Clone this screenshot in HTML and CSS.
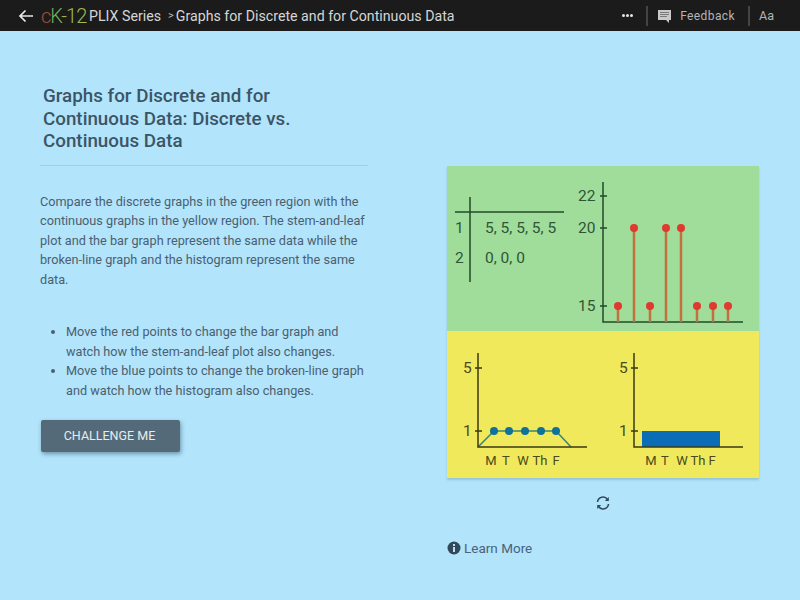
FILE: index.html
```html
<!DOCTYPE html>
<html>
<head>
	<meta charset="utf-8">
	<title>Graphs for Discrete and for Continuous Data</title>
	<link rel="stylesheet" href="styles.css">
</head>
<body>
	<header class="topbar">
		<div class="topLeft">
			<svg class="backIcon" width="16" height="14" viewBox="0 0 16 14">
				<path d="M15 7H2M7.500 1.500L2 7l5.500 5.500" fill="none" stroke="#e8e8e8" stroke-width="1.700"/>
			</svg>
			<span class="logo"><span class="logoC">c</span><span class="logoK">K</span><span class="logoNum">-12</span></span>
			<span class="series">PLIX Series</span>
			<span class="crumbSep">&gt;</span>
			<span class="crumb">Graphs for Discrete and for Continuous Data</span>
		</div>
		<div class="topRight">
			<span class="dots"><i></i><i></i><i></i></span>
			<span class="divider"></span>
			<svg class="feedIcon" width="13" height="14" viewBox="0 0 13 14">
				<path d="M0 1h13v10h-2v3l-3-3H0z" fill="#c9c9c9"/>
				<path d="M2 3.500h9M2 5.500h9M2 7.500h7" stroke="#7a7a7a" stroke-width="1"/>
			</svg>
			<span class="feedback">Feedback</span>
			<span class="divider"></span>
			<span class="fontBtn">Aa</span>
		</div>
	</header>

	<main class="page">
		<section class="textCol">
			<h1 class="title">Graphs for Discrete and for Continuous Data: Discrete vs. Continuous Data</h1>
			<p class="intro">Compare the discrete graphs in the green region with the continuous graphs in the yellow region. The stem-and-leaf plot and the bar graph represent the same data while the broken-line graph and the histogram represent the same data.</p>
			<ul class="steps">
				<li>Move the red points to change the bar graph and watch how the stem-and-leaf plot also changes.</li>
				<li>Move the blue points to change the broken-line graph and watch how the histogram also changes.</li>
			</ul>
			<button class="challenge">CHALLENGE ME</button>
		</section>

		<section class="figCol">
			<svg class="figure" width="312" height="312" viewBox="447 166 312 312">
				<rect x="447" y="166" width="312" height="165" fill="#a0dd9b"/>
				<rect x="447" y="331" width="312" height="148" fill="#f0e95c"/>

				<g stroke="#234a2a" stroke-width="1.500" fill="none">
					<path d="M470 197V282M455 212H564"/>
					<path d="M603 182V322H743M600 196H607M600 228H607M600 306H607"/>
				</g>
				<g fill="#2f5535" font-size="15.500">
					<text x="455" y="233">1</text>
					<text x="455" y="263">2</text>
					<text x="485" y="233">5, 5, 5, 5, 5</text>
					<text x="485" y="263">0, 0, 0</text>
					<text x="578" y="201">22</text>
					<text x="578" y="233">20</text>
					<text x="578" y="311">15</text>
				</g>
				<g stroke="#c2703f" stroke-width="2.500">
					<path d="M618 306V322M634 228V322M650 306V322M666 228V322M681 228V322M697 306V322M713 306V322M728 306V322"/>
				</g>
				<g fill="#e0392f">
					<circle cx="618" cy="306" r="4"/>
					<circle cx="634" cy="228" r="4"/>
					<circle cx="650" cy="306" r="4"/>
					<circle cx="666" cy="228" r="4"/>
					<circle cx="681" cy="228" r="4"/>
					<circle cx="697" cy="306" r="4"/>
					<circle cx="713" cy="306" r="4"/>
					<circle cx="728" cy="306" r="4"/>
				</g>

				<rect x="642" y="431" width="78" height="16" fill="#0b6db5"/>
				<path d="M478 447L494 431H556L571 447" fill="none" stroke="#3b8272" stroke-width="1.500"/>
				<g stroke="#3a3a14" stroke-width="1.500" fill="none">
					<path d="M478 353V447H587M475 368H482M475 431H482"/>
					<path d="M634 353V447H743M631 368H638M631 431H638"/>
				</g>
				<g fill="#0f7299">
					<circle cx="494" cy="431" r="4"/>
					<circle cx="509" cy="431" r="4"/>
					<circle cx="525" cy="431" r="4"/>
					<circle cx="541" cy="431" r="4"/>
					<circle cx="556" cy="431" r="4"/>
				</g>
				<g fill="#4a4a1c" font-size="15.500">
					<text x="463" y="373">5</text>
					<text x="463" y="436">1</text>
					<text x="619" y="373">5</text>
					<text x="619" y="436">1</text>
				</g>
				<g fill="#4a4a1c" font-size="13" text-anchor="middle">
					<text x="491" y="465">M</text>
					<text x="506" y="465">T</text>
					<text x="523" y="465">W</text>
					<text x="540" y="465">Th</text>
					<text x="556" y="465">F</text>
					<text x="651" y="465">M</text>
					<text x="665" y="465">T</text>
					<text x="682" y="465">W</text>
					<text x="698" y="465">Th</text>
					<text x="712" y="465">F</text>
				</g>
			</svg>
			<div class="reload">
				<svg width="16" height="16" viewBox="0 0 16 16" fill="none" stroke="#33495a" stroke-width="1.600">
					<path d="M2.500 7A5.500 5.500 0 0 1 12.500 4.500"/>
					<path d="M13.500 9A5.500 5.500 0 0 1 3.500 11.500"/>
					<path d="M13.800 2v4h-4z" fill="#33495a" stroke="none"/>
					<path d="M2.200 14v-4h4z" fill="#33495a" stroke="none"/>
				</svg>
			</div>
			<a class="learn">
				<svg width="14" height="14" viewBox="0 0 14 14">
					<circle cx="7" cy="7" r="6.500" fill="#33495a"/>
					<rect x="6" y="6" width="2" height="5" fill="#b2e4fb"/>
					<rect x="6" y="3" width="2" height="2" fill="#b2e4fb"/>
				</svg>
				<span>Learn More</span>
			</a>
		</section>
	</main>
</body>
</html>
```

FILE: styles.css
```css
body{
	margin: 0;
	height: 600px;
	overflow: hidden;
	background-color: #b2e4fb;
	font-family: Roboto, "Liberation Sans", sans-serif;
	color: #4a6070;
}
.topbar{
	height: 31px;
	background-color: #1b1b1b;
	display: flex;
	justify-content: space-between;
	align-items: center;
	color: #d6d6d6;
	font-size: 14.200px;
}
.topLeft{
	display: flex;
	align-items: center;
	padding-left: 18px;
}
.backIcon{
	margin-right: 7px;
}
.logo{
	font-family: Roboto, sans-serif;
	font-weight: 300;
	font-size: 20px;
	letter-spacing: -1px;
	width: 48px;
	white-space: nowrap;
}
.logoC{
	color: #a0503a;
}
.logoK{
	color: #6fb25a;
}
.logoNum{
	color: #9fb84f;
}
.crumbSep{
	margin: 0 2px 0 7px;
	font-size: 11px;
	color: #bdbdbd;
}
.topRight{
	display: flex;
	align-items: center;
}
.dots{
	display: flex;
	gap: 1px;
	margin-right: 13px;
}
.dots i{
	width: 3px;
	height: 3px;
	border-radius: 50%;
	background-color: #e6e6e6;
}
.divider{
	width: 2px;
	height: 20px;
	background-color: #444;
}
.feedIcon{
	margin-left: 10px;
	margin-right: 9px;
}
.feedback{
	font-size: 12px;
	letter-spacing: 0.4px;
	color: #b5b5b5;
	margin-right: 13px;
}
.fontBtn{
	font-size: 12.500px;
	color: #b5b5b5;
	margin-left: 9px;
	margin-right: 26px;
}
.page{
	display: flex;
	padding-left: 40px;
}
.textCol{
	width: 328px;
	padding-top: 54px;
}
.title{
	margin: 0;
	padding: 0 50px 12px 3px;
	font-size: 18.800px;
	line-height: 22.500px;
	font-weight: 500;
	color: #3c5566;
	border-bottom: 1px solid #9fd0e6;
}
.intro{
	margin: 26px 0 0 0;
	font-size: 12.700px;
	line-height: 19.600px;
}
.steps{
	margin: 32.500px 0 0 0;
	padding-left: 26px;
	font-size: 12.700px;
	line-height: 19.600px;
}
.challenge{
	display: block;
	margin: 19.500px 0 0 1px;
	padding-right: 8px;
	width: 139px;
	height: 32px;
	border: none;
	border-radius: 2px;
	background-color: #546a79;
	color: #e6ecef;
	font-family: inherit;
	font-size: 12.500px;
	box-shadow: 1px 2px 4px rgba(40,70,90,0.5);
}
.figCol{
	margin-left: 79px;
	padding-top: 135px;
	width: 312px;
}
.figure{
	display: block;
	box-shadow: 0 2px 2px rgba(60,100,120,0.25);
}
.figure text{
	font-family: Roboto, sans-serif;
}
.reload{
	display: flex;
	justify-content: center;
	margin-top: 17px;
}
.learn{
	display: flex;
	align-items: center;
	gap: 3px;
	margin-top: 29px;
	font-size: 13.500px;
	color: #4a6377;
}
```
